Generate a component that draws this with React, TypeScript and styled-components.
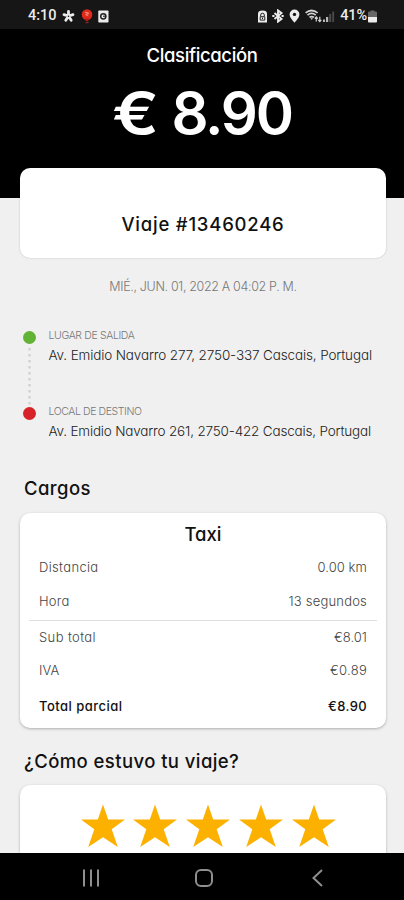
import React from "react";
import styled, { createGlobalStyle } from "styled-components";

const GlobalStyle = createGlobalStyle`
  * { box-sizing: border-box; }
  body {
    margin: 0;
    background: #f0f0f0;
    font-family: Inter, "Noto Sans", sans-serif;
    font-feature-settings: "cv11";
  }
`;

const Screen = styled.div`
  width: 404px;
  height: 900px;
  display: flex;
  flex-direction: column;
  overflow: hidden;
  background: #f0f0f0;
`;

const StatusBar = styled.header`
  flex: none;
  height: 29px;
  padding: 3px 27px 0 28px;
  display: flex;
  align-items: center;
  justify-content: space-between;
  background: #161616;
  color: #ececec;
`;

const StatusGroup = styled.div<{ $gap: number }>`
  display: flex;
  align-items: center;
  gap: ${(p) => p.$gap}px;
`;

const StatusText = styled.span<{ $spacing?: number }>`
  font: 500 14.5px/20px Roboto, sans-serif;
  letter-spacing: ${(p) => p.$spacing ?? 0}px;
`;

const Hero = styled.section`
  flex: none;
  height: 169px;
  display: flex;
  flex-direction: column;
  align-items: center;
  padding-top: 14px;
  background: #000;
  color: #fff;
`;

const HeroTitle = styled.h1`
  margin: 0;
  font-size: 18.5px;
  font-weight: 500;
  line-height: 24px;
  letter-spacing: -0.37px;
`;

const Amount = styled.div`
  display: flex;
  gap: 22px;
  margin-top: 11px;
  font-size: 58px;
  font-weight: 600;
  line-height: 70px;
  letter-spacing: -2.2px;
`;

const Currency = styled.span`
  display: inline-block;
  transform: scaleX(1.2);
  transform-origin: left center;
`;

const Content = styled.main`
  flex: 1;
  min-height: 0;
  overflow: hidden;
  margin-top: -30px;
  padding: 0 18px 0 20px;
`;

const Card = styled.section`
  border-radius: 10px;
  background: #fff;
  box-shadow: 0 1px 3px rgba(0, 0, 0, 0.28);
`;

const TripCard = styled(Card)`
  height: 90px;
  padding-top: 44px;
  text-align: center;
  font-size: 18.5px;
  font-weight: 500;
  line-height: 24px;
  letter-spacing: 0.78px;
  color: #111;
  box-shadow: 0 0 2px rgba(0, 0, 0, 0.22);
`;

const DateLine = styled.p`
  margin: 19px 0 0;
  text-align: center;
  font-size: 12.5px;
  font-weight: 300;
  line-height: 20px;
  letter-spacing: -0.34px;
  color: #777;
`;

const Route = styled.div`
  display: flex;
  gap: 13px;
  margin-top: 29px;
  padding-left: 2.5px;
  height: 117px;
`;

const Track = styled.div`
  width: 13px;
  padding-top: 5px;
  display: flex;
  flex-direction: column;
  align-items: center;
`;

const Dot = styled.span<{ $color: string }>`
  width: 13px;
  height: 13px;
  border-radius: 50%;
  background: ${(p) => p.$color};
`;

const Stops = styled.div`
  display: flex;
  flex-direction: column;
  gap: 37px;
  white-space: nowrap;
`;

const StopLabel = styled.div<{ $spacing: number }>`
  height: 19px;
  font-size: 10.5px;
  font-weight: 300;
  line-height: 20px;
  letter-spacing: ${(p) => p.$spacing}px;
  color: #777;
`;

const StopAddress = styled.div<{ $spacing: number }>`
  height: 20px;
  font-size: 13.5px;
  font-weight: 300;
  line-height: 20px;
  letter-spacing: ${(p) => p.$spacing}px;
  color: #222;
`;

const SectionTitle = styled.h2<{ $top: number }>`
  margin: ${(p) => p.$top}px 0 0 4px;
  font-size: 18.5px;
  font-weight: 500;
  line-height: 24px;
  letter-spacing: 0.42px;
  color: #111;
`;

const ChargesCard = styled(Card)`
  height: 215px;
  margin-top: 13px;
  padding: 9px 9px 0;
`;

const ChargesTitle = styled.h3`
  margin: 0 0 4px;
  text-align: center;
  font-size: 18.5px;
  font-weight: 500;
  line-height: 24px;
  color: #111;
`;

const ChargeRow = styled.div<{ $height: number; $strong?: boolean }>`
  display: flex;
  align-items: center;
  justify-content: space-between;
  height: ${(p) => p.$height}px;
  padding: 0 10px;
  font-size: 13px;
  font-weight: ${(p) => (p.$strong ? 500 : 300)};
  color: ${(p) => (p.$strong ? "#111" : "#444")};
`;

const Cell = styled.span<{ $spacing: number }>`
  letter-spacing: ${(p) => p.$spacing}px;
`;

const Divider = styled.hr`
  height: 1px;
  margin: 2px 0 0;
  border: 0;
  background: #dedede;
`;

const RatingCard = styled(Card)`
  height: 90px;
  margin-top: 12px;
  padding: 19px 0 0 60.5px;
  display: flex;
  gap: 8.8px;
`;

const NavBar = styled.nav`
  flex: none;
  height: 47px;
  padding: 2px 77px 0 81px;
  display: flex;
  align-items: center;
  justify-content: space-between;
  background: #000;
`;

type Charge = { label: string; ls: number; value: string; vs: number; height: number; strong?: boolean };

const usage: Charge[] = [
  { label: "Distancia", ls: 0.34, value: "0.00 km", vs: 0.08, height: 34 },
  { label: "Hora", ls: 0.22, value: "13 segundos", vs: 0.2, height: 34 },
];

const totals: Charge[] = [
  { label: "Sub total", ls: 0.39, value: "€8.01", vs: 0.02, height: 31 },
  { label: "IVA", ls: 0.16, value: "€0.89", vs: 0.28, height: 36 },
  { label: "Total parcial", ls: 0.47, value: "€8.90", vs: 0.39, height: 36, strong: true },
];

const Charges = ({ rows }: { rows: Charge[] }) => (
  <>
    {rows.map((r) => (
      <ChargeRow key={r.label} $height={r.height} $strong={r.strong}>
        <Cell $spacing={r.ls}>{r.label}</Cell>
        <Cell $spacing={r.vs}>{r.value}</Cell>
      </ChargeRow>
    ))}
  </>
);

const AsteriskIcon = () => (
  <svg width="13" height="14" viewBox="0 0 13 14" fill="none" stroke="#ececec" strokeWidth="2.8" strokeLinecap="round">
    <path d="M6.5 7V2.4M6.5 7L2 5.6M6.5 7L11 5.6M6.5 7L3.8 11.2M6.5 7L9.2 11.2" />
    <circle cx="6.5" cy="7.2" r="0.8" fill="#161616" stroke="none" />
  </svg>
);

const BalloonIcon = () => (
  <svg width="12" height="15" viewBox="0 0 12 15">
    <ellipse cx="6" cy="5.6" rx="5.3" ry="5.4" fill="#e02a1c" />
    <path d="M3.4 9.5h5.2L7 12H5z" fill="#b51d13" />
    <path d="M4.5 13.5h3" stroke="#8b2a20" strokeWidth="1.4" />
    <path d="M4.2 3.4l3.6 1M4.6 5.6l2.6.6" stroke="#f5a08c" strokeWidth="1.1" />
  </svg>
);

const AppIcon = () => (
  <svg width="11" height="13" viewBox="0 0 11 13">
    <rect x="0.3" y="0.5" width="10.2" height="12" rx="0.8" fill="#ececec" />
    <circle cx="5.3" cy="6.3" r="2.6" fill="none" stroke="#222" strokeWidth="1.5" />
    <path d="M5 6.2h3" stroke="#222" strokeWidth="1.1" />
  </svg>
);

const BatterySaverIcon = () => (
  <svg width="9" height="13" viewBox="0 0 9 13">
    <path d="M0 12.5V3.6Q0 .8 4.5.6 9 .8 9 3.6v8.900z" fill="#ececec" />
    <path d="M2.700 6.200V5a1.800 1.800 0 0 1 3.600 0v1.200M2.200 6.700h4.600v3.400H2.200zM4.500 7.500v1.500" fill="none" stroke="#222" strokeWidth="1" />
  </svg>
);

const BluetoothIcon = () => (
  <svg width="12" height="14" viewBox="0 0 12 14" fill="none" stroke="#ececec" strokeWidth="1.9">
    <path d="M2.5 4l7 6L6 12.600V1.400l3.500 2.600-7 6" />
    <path d="M.3 7h2.200M9.500 7h2.200" />
  </svg>
);

const PinIcon = () => (
  <svg width="11" height="14" viewBox="0 0 11 14">
    <path d="M5.5.5a4.9 4.900 0 0 1 4.900 4.900C10.400 8.700 5.500 13.500 5.500 13.500S.6 8.700.6 5.400A4.900 4.900 0 0 1 5.500.5z" fill="#ececec" />
    <circle cx="5.500" cy="5.400" r="1.700" fill="#161616" />
  </svg>
);

const WifiIcon = () => (
  <svg width="17" height="14" viewBox="0 0 17 14" fill="none" stroke="#d4d4d4" strokeWidth="1.700">
    <path d="M.6 3.900Q6.500-.9 12.600 3.900M2.500 6.100Q6.600 2.800 10.700 6.100M4.500 8.400Q6.700 6.700 9 8.400" />
    <path d="M5.400 9.300h2.600l-1.300 1.800z" fill="#d4d4d4" stroke="none" />
    <path d="M11.300 12.500V8.200M9.800 9.700l1.500-1.700 1.500 1.700M14.800 7.800v4.500M13.300 10.900l1.500 1.600 1.500-1.600" strokeWidth="1.200" />
  </svg>
);

const SignalIcon = () => (
  <svg width="12" height="13" viewBox="0 0 12 13">
    <path d="M0 12V9.500h2V12zM3 12V7h2.200v5z" fill="#b8b8b8" />
    <path d="M6.200 12V4h2v8zM9.300 12V1.500h1.800V12z" fill="#4b4b4b" />
  </svg>
);

const BatteryIcon = () => (
  <svg width="9" height="13" viewBox="0 0 9 13">
    <path d="M0 7V2.500Q0 1.500 1 1.500H2.500V.4h4v1.100H8q1 0 1 1V7z" fill="#666" />
    <path d="M0 7h9v4.500q0 1-1 1H1q-1 0-1-1z" fill="#ececec" />
  </svg>
);

const DottedLine = () => (
  <svg width="5" height="63" viewBox="0 0 5 63">
    <path d="M2.500 4V61" stroke="#d0d0d0" strokeWidth="2.200" strokeDasharray="2.500 3.500" />
  </svg>
);

const Star = () => (
  <svg width="44" height="44" viewBox="0 0 44 44">
    <path d="M22 .5L27.200 15.600H44L30.700 25.300 36.800 43 22 33.300 7.200 43 13.300 25.300 0 15.600H16.800z" fill="#fcb000" />
  </svg>
);

const RecentsIcon = () => (
  <svg width="20" height="20" viewBox="0 0 20 20" stroke="#8f8f8f" strokeWidth="2">
    <path d="M3 1.500v17M10 1.500v17M17 1.500v17" />
  </svg>
);

const HomeIcon = () => (
  <svg width="20" height="20" viewBox="0 0 20 20" fill="none" stroke="#8f8f8f" strokeWidth="2">
    <rect x="2" y="2" width="16" height="16" rx="5" />
  </svg>
);

const BackIcon = () => (
  <svg width="20" height="20" viewBox="0 0 20 20" fill="none" stroke="#8f8f8f" strokeWidth="2">
    <path d="M15 2L6.500 10 15 18" />
  </svg>
);

export default function App() {
  return (
    <>
      <GlobalStyle />
      <Screen>
        <StatusBar>
          <StatusGroup $gap={5.5}>
            <StatusText>4:10</StatusText>
            <AsteriskIcon />
            <BalloonIcon />
            <AppIcon />
          </StatusGroup>
          <StatusGroup $gap={5}>
            <BatterySaverIcon />
            <BluetoothIcon />
            <PinIcon />
            <StatusGroup $gap={1}>
              <WifiIcon />
              <SignalIcon />
            </StatusGroup>
            <StatusGroup $gap={1}>
              <StatusText $spacing={-0.1}>41%</StatusText>
              <BatteryIcon />
            </StatusGroup>
          </StatusGroup>
        </StatusBar>

        <Hero>
          <HeroTitle>Clasificación</HeroTitle>
          <Amount>
            <Currency>€</Currency>
            <span>8.90</span>
          </Amount>
        </Hero>

        <Content>
          <TripCard>Viaje #13460246</TripCard>
          <DateLine>MIÉ., JUN. 01, 2022 A 04:02 P. M.</DateLine>

          <Route>
            <Track>
              <Dot $color="#62b236" />
              <DottedLine />
              <Dot $color="#d6232a" />
            </Track>
            <Stops>
              <div>
                <StopLabel $spacing={-0.36}>LUGAR DE SALIDA</StopLabel>
                <StopAddress $spacing={-0.14}>Av. Emidio Navarro 277, 2750-337 Cascais, Portugal</StopAddress>
              </div>
              <div>
                <StopLabel $spacing={-0.41}>LOCAL DE DESTINO</StopLabel>
                <StopAddress $spacing={-0.18}>Av. Emidio Navarro 261, 2750-422 Cascais, Portugal</StopAddress>
              </div>
            </Stops>
          </Route>

          <SectionTitle $top={33}>Cargos</SectionTitle>
          <ChargesCard>
            <ChargesTitle>Taxi</ChargesTitle>
            <Charges rows={usage} />
            <Divider />
            <Charges rows={totals} />
          </ChargesCard>

          <SectionTitle $top={21}>¿Cómo estuvo tu viaje?</SectionTitle>
          <RatingCard>
            {[1, 2, 3, 4, 5].map((n) => (
              <Star key={n} />
            ))}
          </RatingCard>
        </Content>

        <NavBar>
          <RecentsIcon />
          <HomeIcon />
          <BackIcon />
        </NavBar>
      </Screen>
    </>
  );
}
